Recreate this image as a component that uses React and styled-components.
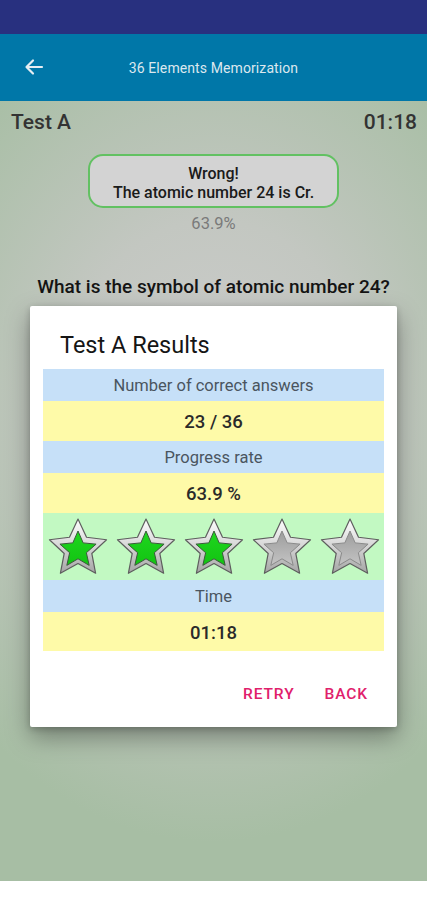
import React from 'react';
import styled, { createGlobalStyle } from 'styled-components';

const Global = createGlobalStyle`
  html, body { margin: 0; padding: 0; }
  body {
    font-family: Roboto, "Noto Sans", "Liberation Sans", sans-serif;
    background: #fff;
  }
`;

const starPoints = (cx, cy, R, r) => {
  const pts = [];
  for (let i = 0; i < 10; i++) {
    const a = (-90 + i * 36) * (Math.PI / 180);
    const rad = i % 2 === 0 ? R : r;
    pts.push(`${(cx + rad * Math.cos(a)).toFixed(2)},${(cy + rad * Math.sin(a)).toFixed(2)}`);
  }
  return pts.join(' ');
};

const Star = ({ on, id }) => (
  <svg width="62" height="60" viewBox="0 0 62 60">
    <defs>
      <linearGradient id={`rim${id}`} x1="0" y1="0" x2="0" y2="1">
        <stop offset="0" stopColor="#ffffff" />
        <stop offset="0.5" stopColor="#d6d6d6" />
        <stop offset="1" stopColor="#a4a4a4" />
      </linearGradient>
      <linearGradient id={`in${id}`} x1="0" y1="0" x2="0" y2="1">
        {on ? (
          <>
            <stop offset="0" stopColor="#1fd61f" />
            <stop offset="1" stopColor="#12c412" />
          </>
        ) : (
          <>
            <stop offset="0" stopColor="#9c9c9c" />
            <stop offset="1" stopColor="#c4c4c4" />
          </>
        )}
      </linearGradient>
    </defs>
    <polygon
      points={starPoints(31, 32, 30, 14.5)}
      fill={`url(#rim${id})`}
      stroke="#5e5e5e"
      strokeWidth="1.2"
      strokeLinejoin="round"
    />
    <polygon
      points={starPoints(31, 33, 19, 8.8)}
      fill={`url(#in${id})`}
      stroke={on ? '#3a5a3a' : '#8a8a8a'}
      strokeWidth="1"
      strokeLinejoin="round"
    />
  </svg>
);

const Screen = styled.div`
  width: 427px;
  height: 900px;
  position: relative;
  display: flex;
  flex-direction: column;
  overflow: hidden;
`;

const StatusBar = styled.div`
  height: 34px;
  background: #28307f;
`;

const AppBar = styled.div`
  height: 67px;
  background: #0077a8;
  display: flex;
  align-items: center;
  position: relative;
  justify-content: center;
  color: #dce8ef;
`;

const BackButton = styled.div`
  position: absolute;
  left: 22px;
  top: 21px;
  width: 24px;
  height: 24px;
`;

const Title = styled.div`
  font-size: 14px;
  letter-spacing: 0.1px;
`;

const Content = styled.div`
  flex: 1;
  background: radial-gradient(ellipse 80% 55% at 50% 40%, #cdcdcd 0%, #c3c7c1 45%, #a7bea4 100%);
  display: flex;
  flex-direction: column;
  align-items: center;
`;

const HeaderRow = styled.div`
  align-self: stretch;
  display: flex;
  justify-content: space-between;
  padding: 9px 10px 0 11px;
  font-size: 21px;
  font-weight: 500;
  color: #333;
  line-height: 24px;
`;

const Bubble = styled.div`
  margin-top: 20px;
  width: 251px;
  height: 54px;
  padding-top: 4px;
  box-sizing: border-box;
  border: 2px solid #62c162;
  border-radius: 15px;
  background: #d3d3d3;
  display: flex;
  flex-direction: column;
  justify-content: center;
  align-items: center;
  font-size: 16px;
  font-weight: 500;
  line-height: 19px;
  color: #1a1a1a;
`;

const Percent = styled.div`
  margin-top: 6px;
  font-size: 16.5px;
  color: #7a7a7a;
`;

const Question = styled.div`
  margin-top: 42px;
  font-size: 19px;
  font-weight: 500;
  color: #141414;
`;

const BottomBar = styled.div`
  height: 19px;
  background: #ffffff;
`;

const Dialog = styled.div`
  position: absolute;
  left: 30px;
  top: 306px;
  width: 367px;
  height: 421px;
  background: #fff;
  border-radius: 2px;
  box-shadow: 0 10px 24px rgba(0, 0, 0, 0.35), 0 2px 6px rgba(0, 0, 0, 0.2);
  display: flex;
  flex-direction: column;
`;

const DialogTitle = styled.div`
  font-size: 23.5px;
  color: #151515;
  padding: 25px 0 0 30px;
  height: 38px;
  line-height: 28px;
`;

const Table = styled.div`
  margin: 0 13px;
  display: flex;
  flex-direction: column;
`;

const Cell = styled.div`
  display: flex;
  align-items: center;
  justify-content: center;
  height: ${(p) => p.$h}px;
  background: ${(p) => p.$bg};
  font-size: ${(p) => (p.$value ? 18.5 : 16.5)}px;
  font-weight: ${(p) => (p.$value ? 500 : 400)};
  color: ${(p) => (p.$value ? '#2a2a2a' : '#4a5560')};
  padding-top: ${(p) => (p.$value ? 2 : 0)}px;
  box-sizing: border-box;
`;

const StarRow = styled.div`
  height: 67px;
  background: #c2f9c2;
  display: flex;
  align-items: center;
  justify-content: space-between;
  padding: 0 3px 0 4px;
`;

const Actions = styled.div`
  display: flex;
  justify-content: flex-end;
  gap: 30px;
  padding: 34px 29px 0 0;
`;

const Action = styled.div`
  font-size: 15.5px;
  font-weight: 500;
  letter-spacing: 0.9px;
  color: #e0206b;
`;

const BLUE = '#c6e0f8';
const YELLOW = '#fefaa8';

export default function App() {
  return (
    <>
      <Global />
      <Screen>
        <StatusBar />
        <AppBar>
          <BackButton>
            <svg width="24" height="24" viewBox="0 0 24 24">
              <path
                d="M20 12H5M11 5.5L4.5 12 11 18.5"
                fill="none"
                stroke="#e6eef3"
                strokeWidth="2.2"
                strokeLinecap="round"
                strokeLinejoin="round"
              />
            </svg>
          </BackButton>
          <Title>36 Elements Memorization</Title>
        </AppBar>
        <Content>
          <HeaderRow>
            <span>Test A</span>
            <span>01:18</span>
          </HeaderRow>
          <Bubble>
            <div>Wrong!</div>
            <div>The atomic number 24 is Cr.</div>
          </Bubble>
          <Percent>63.9%</Percent>
          <Question>What is the symbol of atomic number 24?</Question>
        </Content>
        <BottomBar />
        <Dialog>
          <DialogTitle>Test A Results</DialogTitle>
          <Table>
            <Cell $h={32} $bg={BLUE}>Number of correct answers</Cell>
            <Cell $h={40} $bg={YELLOW} $value>23 / 36</Cell>
            <Cell $h={32} $bg={BLUE}>Progress rate</Cell>
            <Cell $h={40} $bg={YELLOW} $value>63.9 %</Cell>
            <StarRow>
              {[true, true, true, false, false].map((on, i) => (
                <Star key={i} id={i} on={on} />
              ))}
            </StarRow>
            <Cell $h={32} $bg={BLUE}>Time</Cell>
            <Cell $h={39} $bg={YELLOW} $value>01:18</Cell>
          </Table>
          <Actions>
            <Action>RETRY</Action>
            <Action>BACK</Action>
          </Actions>
        </Dialog>
      </Screen>
    </>
  );
}
